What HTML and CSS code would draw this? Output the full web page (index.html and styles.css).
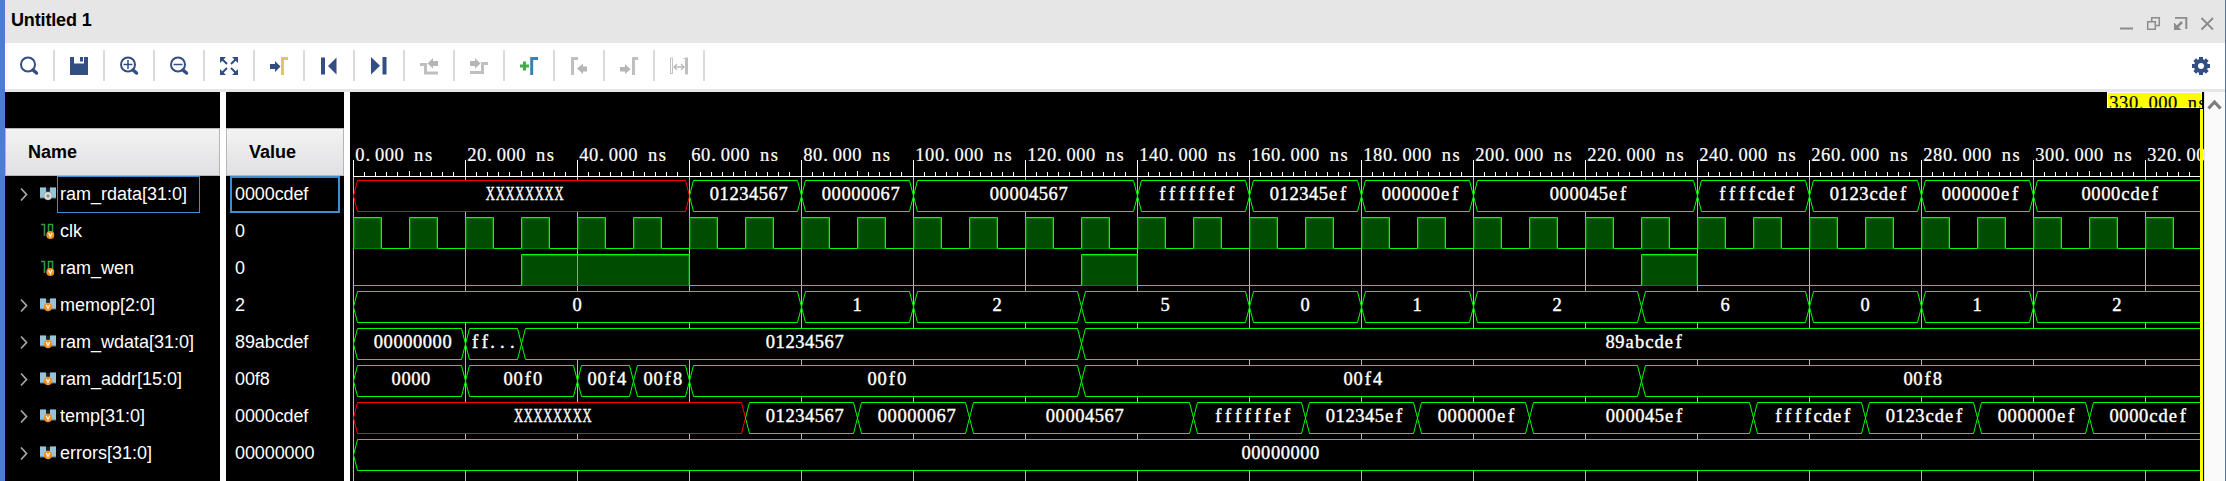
FILE: index.html
```
<!DOCTYPE html>
<html lang="en">
<head>
<meta charset="utf-8">
<title>Untitled 1</title>
<link rel="stylesheet" href="styles.css">
</head>
<body>
<svg class="defs" width="0" height="0">
  <symbol id="bus" viewBox="0 0 16 14">
    <path d="M0 1h6v3l2 1.500 2-1.500V1h6v10H0z" fill="#98c3d8"/>
    <path d="M0 .5h6M10 .5h6" stroke="#5d7480"/>
    <path d="M6 1v3l2 2 2-2V1z" fill="#16242c"/>
    <path d="M0 11h16" stroke="#5d7480"/>
  </symbol>
  <symbol id="bit" viewBox="0 0 13 16">
    <path d="M0 1.500h3.500V13M7.500 11V1.500h4V10" fill="none" stroke="#2f9a45" stroke-width="1.600"/>
  </symbol>
  <symbol id="chev" viewBox="0 0 8 14"><path d="M1 1l5.500 6L1 13" fill="none" stroke="#a4a4a4" stroke-width="1.800"/></symbol>
</svg>
<div class="window">
  <header class="titlebar">
    <span class="title">Untitled 1</span>
    <svg class="winbtns" width="96" height="14" viewBox="0 0 96 14" fill="none" stroke="#8c8c8c" stroke-width="1.500">
      <path d="M0 11.500h13" stroke-width="2"/>
      <path d="M27.700 4.700h7.600v7.600h-7.600zM31.700 4.500V.8h7.600v7.600h-3.800"/>
      <path d="M55 .8h11.300V12" stroke-width="2"/><path d="M62 5l-5 5" stroke-width="2.500"/><path d="M54 5.500v7.500h7.500z" fill="#8c8c8c" stroke="none"/>
      <path d="M81.500 1l11.500 11.500M93 1L81.500 12.500" stroke-width="1.900"/>
    </svg>
  </header>
  <nav class="toolbar" id="toolbar">
    <span class="tool"><svg width="20" height="20" viewBox="0 0 20 20"><circle cx="9" cy="8.500" r="7" fill="none" stroke="#324e83" stroke-width="2"/><path d="M14 14l3.500 3" stroke="#324e83" stroke-width="3.500" stroke-linecap="round"/></svg></span>
    <span class="tool"><svg width="20" height="20" viewBox="0 0 20 20"><path d="M1 1h4v6.500h10V1h4v18H1z" fill="#324e83"/><path d="M11 1h3v4.500h-3z" fill="#324e83"/></svg></span>
    <span class="tool"><svg width="20" height="20" viewBox="0 0 20 20"><circle cx="9" cy="8.500" r="7" fill="none" stroke="#324e83" stroke-width="2"/><path d="M14 14l3.500 3" stroke="#324e83" stroke-width="3.500" stroke-linecap="round"/><path d="M4.500 8.500h9M9 4v9" stroke="#324e83" stroke-width="1.500"/></svg></span>
    <span class="tool"><svg width="20" height="20" viewBox="0 0 20 20"><circle cx="9" cy="8.500" r="7" fill="none" stroke="#324e83" stroke-width="2"/><path d="M14 14l3.500 3" stroke="#324e83" stroke-width="3.500" stroke-linecap="round"/><path d="M4.500 8.500h9" stroke="#324e83" stroke-width="1.500"/></svg></span>
    <span class="tool"><svg width="20" height="20" viewBox="0 0 20 20"><path d="M1 1h6L1 7zM19 1h-6l6 6zM1 19h6l-6-6zM19 19h-6l6-6z" fill="#324e83"/><path d="M2 2l6 6M18 2l-6 6M2 18l6-6M18 18l-6-6" stroke="#324e83" stroke-width="2"/></svg></span>
    <span class="tool"><svg width="20" height="20" viewBox="0 0 20 20"><path d="M1 8h5V5l5.500 5.500L6 16v-3H1z" fill="#324e83"/><path d="M13.500 19V2.500H19" fill="none" stroke="#dfc761" stroke-width="3"/></svg></span>
    <span class="tool"><svg width="20" height="20" viewBox="0 0 20 20"><path d="M2 1.500h4v17H2zM17.500 1.500v17L9 10z" fill="#324e83"/></svg></span>
    <span class="tool"><svg width="20" height="20" viewBox="0 0 20 20"><path d="M13.500 1h4v17.500h-4zM2 1v17.500l9-8.700z" fill="#324e83"/></svg></span>
    <span class="tool"><svg width="20" height="20" viewBox="0 0 20 20"><path d="M1 8.500h5.500V17H19" fill="none" stroke="#bfbfbf" stroke-width="3"/><path d="M19 5v5h-5v2.500L8.500 7.500 14 2v3z" fill="#b5b5b5"/></svg></span>
    <span class="tool"><svg width="20" height="20" viewBox="0 0 20 20"><path d="M1 16.500h12.500v-9H19" fill="none" stroke="#bfbfbf" stroke-width="3"/><path d="M1 5v5h5v2.500l5.500-5L6 2v3z" fill="#b5b5b5"/></svg></span>
    <span class="tool"><svg width="20" height="20" viewBox="0 0 20 20"><path d="M1 10h9M5.500 5.500v9" stroke="#41ad49" stroke-width="3"/><path d="M12.700 19V2.500H19" fill="none" stroke="#3d80b3" stroke-width="3"/></svg></span>
    <span class="tool"><svg width="20" height="20" viewBox="0 0 20 20"><path d="M3.500 19V2.500H9" fill="none" stroke="#bfbfbf" stroke-width="3"/><path d="M18 10.500v5h-4V18l-6-5.500L14 7.500v3z" fill="#b5b5b5"/></svg></span>
    <span class="tool"><svg width="20" height="20" viewBox="0 0 20 20"><path d="M1 11h5V8l5.500 5.300L6 18v-2.500H1z" fill="#b5b5b5"/><path d="M14.500 19V2.500H19" fill="none" stroke="#bfbfbf" stroke-width="3"/></svg></span>
    <span class="tool"><svg width="20" height="20" viewBox="0 0 20 20"><path d="M3.700 2H1.500v15.500h2.200" fill="none" stroke="#bfbfbf"/><path d="M3.500 2v16" stroke="#c4c4c4"/><path d="M17.500 1.500v17" stroke="#bfbfbf" stroke-width="3"/><path d="M14 2.500h3" stroke="#ccc"/><path d="M5 11h10M8 8l-3 3 3 3M12 8l3 3-3 3" fill="none" stroke="#b8b8b8" stroke-width="1.300"/></svg></span>
    <svg class="gear" width="20" height="20" viewBox="-10 -10 20 20"><circle r="5" fill="none" stroke="#324e83" stroke-width="4"/><g stroke="#324e83" stroke-width="4"><path d="M0-9v4M0 5v4M-9 0h4M5 0h4"/><path d="M-6.300-6.300l3 3M6.300 6.300l-3-3M-6.300 6.300l3-3M6.300-6.300l-3 3"/></g></svg>
  </nav>
  <main class="panes">
    <section class="pane names">
      <h2 class="head head-name">Name</h2>
      <div id="names"></div>
    </section>
    <section class="pane values">
      <h2 class="head head-value">Value</h2>
      <div id="values"></div>
    </section>
    <svg class="wave" id="wave" width="1854" height="389" viewBox="350 92 1854 389"></svg>
    <aside class="scroll"><svg width="15" height="11" viewBox="0 0 15 11"><path d="M1.500 9.500l6-6.500 6 6.500" fill="none" stroke="#7d7d7d" stroke-width="3.200"/></svg></aside>
  </main>
</div>
<script src="wave.js"></script>
</body>
</html>
```
FILE: styles.css
```
body { margin: 0; background: #fff; font-family: "Liberation Sans", Arial, sans-serif; color: #000; }
.defs { position: absolute; }
.window { box-sizing: border-box; width: 2226px; height: 481px; border-left: 5px solid #4d7dd3; border-right: 1px solid #4472bd; overflow: hidden; display: flex; flex-direction: column; }
.titlebar { height: 43px; flex: none; background: #e6e6e6; display: flex; justify-content: space-between; }
.title { font-size: 18px; font-weight: bold; line-height: 20px; padding: 10px 0 0 6px; letter-spacing: -0.150px; }
.winbtns { margin: 17px 9px 0 0; }
.toolbar { height: 46px; flex: none; background: #fff; border-bottom: 3px solid #e6e6e6; display: flex; align-items: flex-start; }
.tool { box-sizing: border-box; width: 50px; height: 31px; margin-top: 7px; padding: 6px 0 0 14px; border-right: 2px solid #dadada; }
.tool svg { display: block; }
.gear { margin: 13px 14px 0 auto; }
.panes { flex: 1; display: flex; background: #fff; }
.pane { background: #000; color: #fff; padding-top: 36px; box-sizing: border-box; height: 389px; }
.names { width: 215px; margin-right: 6px; }
.values { width: 118px; margin-right: 6px; }
.head { box-sizing: border-box; height: 48px; margin: 0; border: 1px solid #b6b6b6; background: linear-gradient(#f3f3f3, #e0e0e3); color: #000; font-size: 18px; line-height: 46px; }
.head-name { padding-left: 22px; }
.head-value { padding-left: 22px; }
.row { height: 37px; display: flex; align-items: center; font-size: 18px; box-sizing: border-box; }
.chev { width: 8px; height: 15px; margin: 0 12px 0 15px; }
.chev.none { visibility: hidden; }
.sig { width: 17px; height: 19px; }
.label { line-height: 35px; height: 35px; border: 1px solid transparent; padding: 0 12px 0 2px; white-space: nowrap; }
.selected .label { border-color: #3d8fd1; }
.val { box-sizing: border-box; width: 110px; height: 37px; line-height: 33px; margin-left: 4px; padding-left: 3px; border: 2px solid transparent; letter-spacing: -0.100px; }
.selected .val { border-color: #3d8fd1; }
.wave { display: block; background: #000; flex: none; }
.wave text { font-family: "Liberation Serif", "Times New Roman", serif; font-size: 18.5px; fill: #fff; text-anchor: middle; }
.wave .data { stroke: #fff; stroke-width: .4px; }
.wave .axis { stroke: #fff; stroke-width: .2px; }
.wave .mark { fill: #000; stroke: #000; stroke-width: .2px; }
.scroll { flex: 1; background: #fafafa; border-left: 1px solid #e4e4e4; padding: 4px 0 0 2px; }
```
FILE: wave.js
```
const X0 = 353, PX = 5.6, END = 330, PITCH = 37, TOP = 180, CW = 9.8;
const bus = s => s.split(' ').map(p => { const [t, v] = p.split(':'); return [+t, v]; });
const signals = [
  { n: 'ram_rdata[31:0]', v: '0000cdef', icon: 'g', d: bus('0:XXXXXXXX 60:01234567 80:00000067 100:00004567 140:ffffffef 160:012345ef 180:000000ef 200:000045ef 240:ffffcdef 260:0123cdef 280:000000ef 300:0000cdef') },
  { n: 'clk', v: '0', hi: Array.from({ length: 33 }, (_, i) => [i * 10, i * 10 + 5]) },
  { n: 'ram_wen', v: '0', hi: [[30, 60], [130, 140], [230, 240]] },
  { n: 'memop[2:0]', v: '2', d: bus('0:0 80:1 100:2 130:5 160:0 180:1 200:2 230:6 260:0 280:1 300:2') },
  { n: 'ram_wdata[31:0]', v: '89abcdef', d: bus('0:00000000 20:ff... 30:01234567 130:89abcdef') },
  { n: 'ram_addr[15:0]', v: '00f8', d: bus('0:0000 20:00f0 40:00f4 50:00f8 60:00f0 130:00f4 230:00f8') },
  { n: 'temp[31:0]', v: '0000cdef', d: bus('0:XXXXXXXX 70:01234567 90:00000067 110:00004567 150:ffffffef 170:012345ef 190:000000ef 210:000045ef 250:ffffcdef 270:0123cdef 290:000000ef 310:0000cdef') },
  { n: 'errors[31:0]', v: '00000000', d: bus('0:00000000') }
];

const X = t => Math.round(X0 + t * PX);
// Places each character in the middle of its own fixed-width cell; capitals are condensed to fit.
const cells = (s, x, y, cls) => {
  const k = s[0] === 'X' ? .68 : 1;
  const xs = [...s].map((c, i) => ((x + CW * (i + (c === '.' ? .3 : .5))) / k).toFixed(1)).join(' ');
  return `<text class="${cls}" xml:space="preserve" transform="scale(${k} 1)" x="${xs}" y="${y}">${s}</text>`;
};

let g = '';
for (let t = 0; t < END; t += 20) g += `<path d="M${X(t) + .5} 177V481" stroke="#b8b8b8"/>`;
signals.forEach((s, r) => {
  const a = TOP + r * PITCH + .5, b = a + 31, m = a + 15.5;
  if (s.hi) {
    let d = `M${X0} ${b}`;
    s.hi.forEach(([p, q]) => {
      const l = X(p) + .5, h = X(q) + .5;
      d += `H${l}V${a}H${h}V${b}`;
      g += `<rect x="${l}" y="${a}" width="${h - l}" height="${b - a}" fill="#004c00"/><rect x="${l + 1}" y="${a + 1}" width="${h - l - 2}" height="${b - a - 1}" fill="none" stroke="#008000"/>`;
      for (let t = 0; t < END; t += 20) if (t > p && t < q) g += `<path d="M${X(t) + .5} ${a}V${b}" stroke="#7fae7f"/>`;
    });
    g += `<path d="${d}H2201" fill="none" stroke="#00ff00"/>`;
    s.hi.forEach(([p, q]) => { g += `<path d="M${X(p) + 1} ${b}H${X(q)}" stroke="#008000"/>`; });
  } else {
    s.d.forEach(([t, v], i) => {
      const l = X(t) + .5, last = i === s.d.length - 1, e = last ? X(END) : X(s.d[i + 1][0]) + .5;
      const right = last ? `H${e}V${b}` : `H${e - 4}L${e} ${m}L${e - 4} ${b}`;
      g += `<path d="M${l} ${m}L${l + 4} ${a}${right}H${l + 4}Z" fill="#000" stroke="${v[0] === 'X' ? '#ff0000' : '#00ff00'}"/>`;
      const n = v.length, c = (l + e) / 2 - .4 + (n === 1 ? 0 : n === 5 ? 1.5 : n * .45);
      g += cells(v, c - n * CW / 2, a + 19.5, 'data');
    });
  }
});
g += '<path d="M353 176.5H2201" stroke="#fff"/>';
for (let t = 0; t < END; t += 2) {
  const y = t % 20 === 0 ? 160 : t % 10 === 0 ? 171 : 172;
  g += `<path d="M${Math.floor(X0 + t * PX) + .5} ${y}V177" stroke="#fff"/>`;
  if (t % 20 === 0) g += cells(t + '.000 ns', X(t) + 2, 161, 'axis');
}
g += '<rect x="2107" y="92" width="95" height="16" fill="#fff"/><rect x="2108" y="93" width="93" height="14" fill="#ff0"/><svg x="2107" y="92" width="97" height="15.500" viewBox="2107 92 97 15.500">' + cells('330.000 ns', 2109, 109, 'mark') + '</svg>';
g += '<rect x="2200" y="109" width="3" height="372" fill="#ff0"/>';
document.getElementById('wave').innerHTML = g;

document.getElementById('names').innerHTML = signals.map((s, i) => `<div class="row${i ? '' : ' selected'}">
<svg class="chev${s.d ? '' : ' none'}"><use href="#chev"/></svg>
<svg class="sig" viewBox="0 0 17 19">${s.d ? '<use href="#bus" y="2" width="16" height="14"/>' : '<use href="#bit" x="1" y="1" width="13" height="16"/>'}
<circle cx="${s.d ? 8 : 10.3}" cy="${s.d ? 11 : 13}" r="${s.d ? 4.2 : 4}" fill="${s.icon ? '#8c8c8c' : '#f29121'}"/>
${s.icon ? '<circle cx="8" cy="11" r="2.700" fill="#8c8c8c" stroke="#e0e0e0" stroke-width="2"/>' : `<path d="M${s.d ? 6.3 : 8.6} ${s.d ? 9 : 11}l1.700 3.500 1.700-3.500" fill="none" stroke="#fff" stroke-width="1.200"/>`}</svg>
<span class="label">${s.n}</span></div>`).join('');
document.getElementById('values').innerHTML = signals.map((s, i) => `<div class="row${i ? '' : ' selected'}"><span class="val">${s.v}</span></div>`).join('');
```
